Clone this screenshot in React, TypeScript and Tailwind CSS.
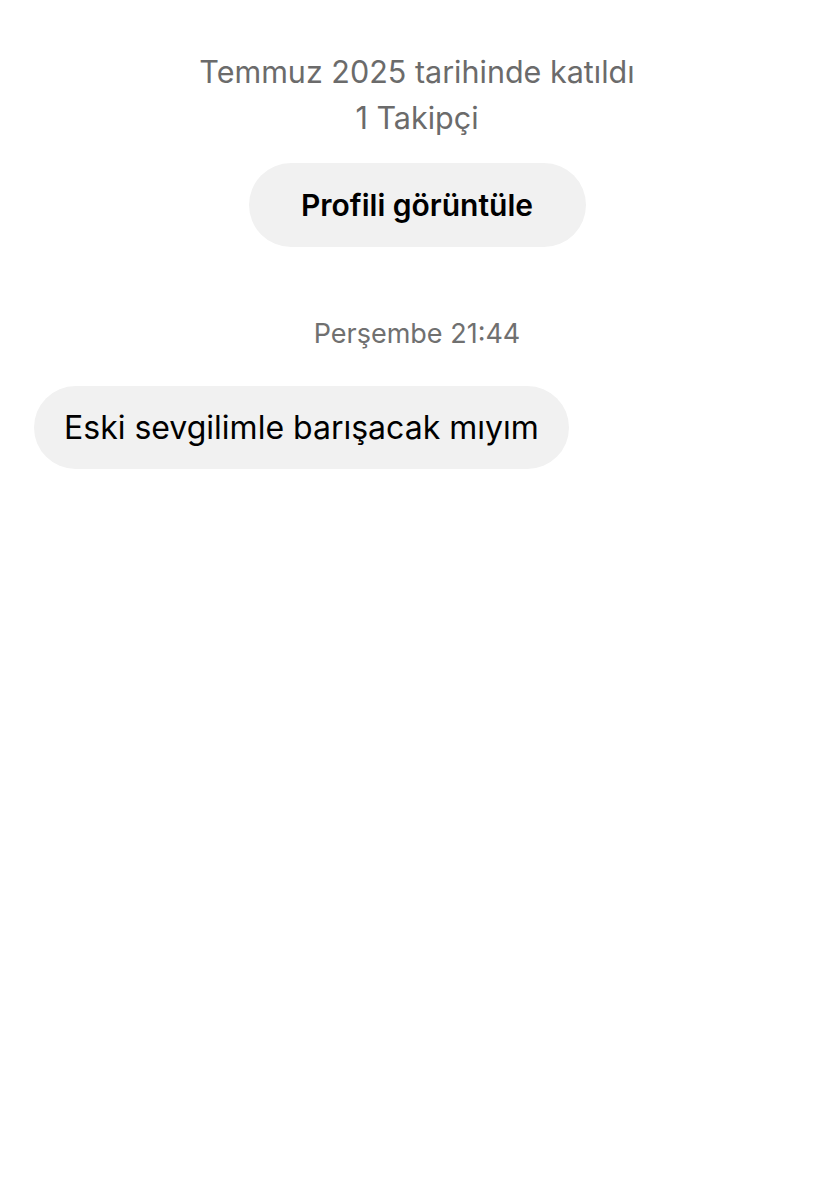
export default function App() {
  return (
    <div
      className="min-h-[1200px] w-full bg-white"
      style={{ fontFamily: 'Inter, "Noto Sans", sans-serif' }}
    >
      {/* profile summary */}
      <div className="flex flex-col items-center pt-[49px]">
        <p className="text-[30.5px] leading-[46px] text-[#6b6b6b]">Temmuz 2025 tarihinde katıldı</p>
        <p className="text-[30.5px] leading-[46px] text-[#6b6b6b]">1 Takipçi</p>
        <button className="mt-[22px] h-[84px] w-[337px] rounded-full bg-[#f1f1f1] text-[30px] font-semibold text-black">
          Profili görüntüle
        </button>
      </div>

      {/* conversation */}
      <div className="mt-[67px] flex justify-center">
        <span className="text-[27px] leading-[40px] text-[#707070]">Perşembe 21:44</span>
      </div>
      <div className="mt-[32px] px-[34px]">
        <div className="inline-flex h-[83px] items-center rounded-full bg-[#f1f1f1] px-[30px] text-[32px] text-black">
          Eski sevgilimle barışacak mıyım
        </div>
      </div>
    </div>
  );
}
